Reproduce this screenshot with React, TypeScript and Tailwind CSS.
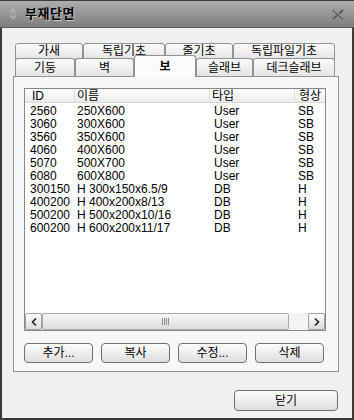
import React from 'react';

const font = { fontFamily: '"Liberation Sans", "Noto Sans CJK KR", sans-serif' };

const backTabs = [
  { label: '가새', w: 'w-[68px]' },
  { label: '독립기초', w: 'w-[82px]' },
  { label: '줄기초', w: 'w-[68px]' },
  { label: '독립파일기초', w: 'w-[102px]' },
];

const frontTabs = [
  { label: '기둥', w: 'w-[60px]' },
  { label: '벽', w: 'w-[59px]' },
  { label: '보', w: 'w-[62px]', active: true },
  { label: '슬래브', w: 'w-[57px]' },
  { label: '데크슬래브', w: 'w-[82px]' },
];

const rows = [
  ['2560', '250X600', 'User', 'SB'],
  ['3060', '300X600', 'User', 'SB'],
  ['3560', '350X600', 'User', 'SB'],
  ['4060', '400X600', 'User', 'SB'],
  ['5070', '500X700', 'User', 'SB'],
  ['6080', '600X800', 'User', 'SB'],
  ['300150', 'H 300x150x6.5/9', 'DB', 'H'],
  ['400200', 'H 400x200x8/13', 'DB', 'H'],
  ['500200', 'H 500x200x10/16', 'DB', 'H'],
  ['600200', 'H 600x200x11/17', 'DB', 'H'],
];

function WinButton({ label, className }: { label: string; className: string }) {
  return (
    <div
      className={`${className} flex items-center justify-center rounded-[4px] border border-[#6f6f6f] bg-gradient-to-b from-[#fdfdfd] to-[#dedede] text-[12px] text-black`}
    >
      {label}
    </div>
  );
}

export default function App() {
  return (
    <div className="w-[354px] h-[420px] flex flex-col bg-[#f0f0f0] text-black" style={font}>
      {/* Title bar */}
      <div className="h-[28px] flex items-center border-t border-[#3a3a3a] border-b border-b-[#5a5a5a] bg-gradient-to-b from-[#adadad] to-[#7e7e7e]">
        <svg width="10" height="12" viewBox="0 0 10 12" className="ml-[8px]">
          <path d="M2 5 L5 2 L8 5" fill="none" stroke="#e0e0e0" strokeWidth="1.6" />
          <path d="M2 7 L5 10 L8 7" fill="none" stroke="#e0e0e0" strokeWidth="1.6" />
          <path d="M2 5 L5 2 L8 5" fill="none" stroke="#555" strokeWidth="0.6" />
          <path d="M2 7 L5 10 L8 7" fill="none" stroke="#555" strokeWidth="0.6" />
        </svg>
        <span className="ml-[7px] text-[13px] font-bold tracking-[0.5px] [text-shadow:1px_1px_0_#c8c8c8]">부재단면</span>
        <svg width="12" height="11" viewBox="0 0 12 11" className="ml-auto mr-[10px]">
          <path d="M1 1 L11 10 M11 1 L1 10" stroke="#5c5c5c" strokeWidth="2" />
          <path d="M2 1 L11 9" stroke="#b8b8b8" strokeWidth="0.8" />
        </svg>
      </div>

      {/* Body */}
      <div className="flex-1 flex flex-col border-x-2 border-b-2 border-[#3c3c3c] pt-[15px]">
        {/* Tabs back row */}
        <div className="flex ml-[13px] h-[15px]">
          {backTabs.map((t) => (
            <div
              key={t.label}
              className={`${t.w} h-[17px] flex items-start justify-center pt-[1px] rounded-t-[3px] border border-[#8c9496] bg-gradient-to-b from-[#fcfcfc] to-[#e4e4e4] text-[12px] leading-[13px]`}
            >
              {t.label}
            </div>
          ))}
        </div>
        {/* Tabs front row */}
        <div className="flex items-end ml-[13px] h-[18px] relative z-10">
          {frontTabs.map((t) =>
            t.active ? (
              <div
                key={t.label}
                className={`${t.w} h-[22px] -mb-[1px] flex items-center justify-center rounded-t-[3px] border border-b-0 border-[#8c9496] bg-[#fbfbfb] text-[12px] font-bold`}
              >
                {t.label}
              </div>
            ) : (
              <div
                key={t.label}
                className={`${t.w} h-[18px] flex items-center justify-center rounded-t-[3px] border border-b-0 border-[#8c9496] bg-gradient-to-b from-[#fcfcfc] to-[#e4e4e4] text-[12px]`}
              >
                {t.label}
              </div>
            )
          )}
        </div>

        {/* Panel */}
        <div className="ml-[11px] w-[326px] h-[296px] border border-[#8c9496] bg-[#f7f7f7] pl-[10px] pt-[11px]">
          {/* List view */}
          <div className="w-[302px] h-[243px] border border-[#828790] bg-white flex flex-col overflow-hidden">
            <div className="flex h-[14px] bg-gradient-to-b from-[#ffffff] to-[#ececec] border-b border-[#d5d5d5] text-[12px] leading-[14px] whitespace-nowrap">
              <div className="w-[50px] shrink-0 pl-[7px] border-r border-[#dcdcdc]">ID</div>
              <div className="w-[135px] shrink-0 pl-[2px] border-r border-[#dcdcdc]">이름</div>
              <div className="w-[85px] shrink-0 pl-[2px] border-r border-[#dcdcdc]">타입</div>
              <div className="w-[60px] shrink-0 pl-[4px]">형상</div>
            </div>
            <div className="pt-[2px] flex-1">
              {rows.map((r) => (
                <div key={r[0]} className="flex h-[13px] text-[12px] leading-[13px] whitespace-nowrap">
                  <div className="w-[50px] shrink-0 pl-[5px]">{r[0]}</div>
                  <div className="w-[135px] shrink-0 pl-[2px]">{r[1]}</div>
                  <div className="w-[85px] shrink-0 pl-[4px]">{r[2]}</div>
                  <div className="w-[40px] shrink-0 pl-[3px]">{r[3]}</div>
                </div>
              ))}
            </div>
            {/* Horizontal scrollbar */}
            <div className="h-[17px] flex bg-[#f4f4f4]">
              <div className="w-[17px] h-[17px] flex items-center justify-center rounded-[2px] border border-[#a0a0a0] bg-gradient-to-b from-[#ffffff] to-[#dcdcdc]">
                <svg width="6" height="8" viewBox="0 0 6 8">
                  <path d="M5 0.5 L1.5 4 L5 7.5" fill="none" stroke="#222" strokeWidth="1.6" />
                </svg>
              </div>
              <div className="w-[247px] h-[17px] flex items-center justify-center rounded-[2px] border border-[#a8a8a8] bg-gradient-to-b from-[#f8f8f8] to-[#dcdcdc]">
                <svg width="8" height="7" viewBox="0 0 8 7">
                  <path d="M0.5 0 V7 M2.5 0 V7 M4.5 0 V7 M6.5 0 V7" stroke="#8a8a8a" strokeWidth="1" />
                </svg>
              </div>
              <div className="flex-1" />
              <div className="w-[17px] h-[17px] flex items-center justify-center rounded-[2px] border border-[#a0a0a0] bg-gradient-to-b from-[#ffffff] to-[#dcdcdc]">
                <svg width="6" height="8" viewBox="0 0 6 8">
                  <path d="M1 0.5 L4.5 4 L1 7.5" fill="none" stroke="#222" strokeWidth="1.6" />
                </svg>
              </div>
            </div>
          </div>

          {/* Buttons */}
          <div className="flex gap-[8px] mt-[12px]">
            <WinButton label="추가..." className="w-[69px] h-[20px]" />
            <WinButton label="복사" className="w-[69px] h-[20px]" />
            <WinButton label="수정..." className="w-[69px] h-[20px]" />
            <WinButton label="삭제" className="w-[69px] h-[20px]" />
          </div>
        </div>

        <div className="flex mt-[18px]">
          <WinButton label="닫기" className="ml-[232px] w-[104px] h-[21px]" />
        </div>
      </div>
    </div>
  );
}
